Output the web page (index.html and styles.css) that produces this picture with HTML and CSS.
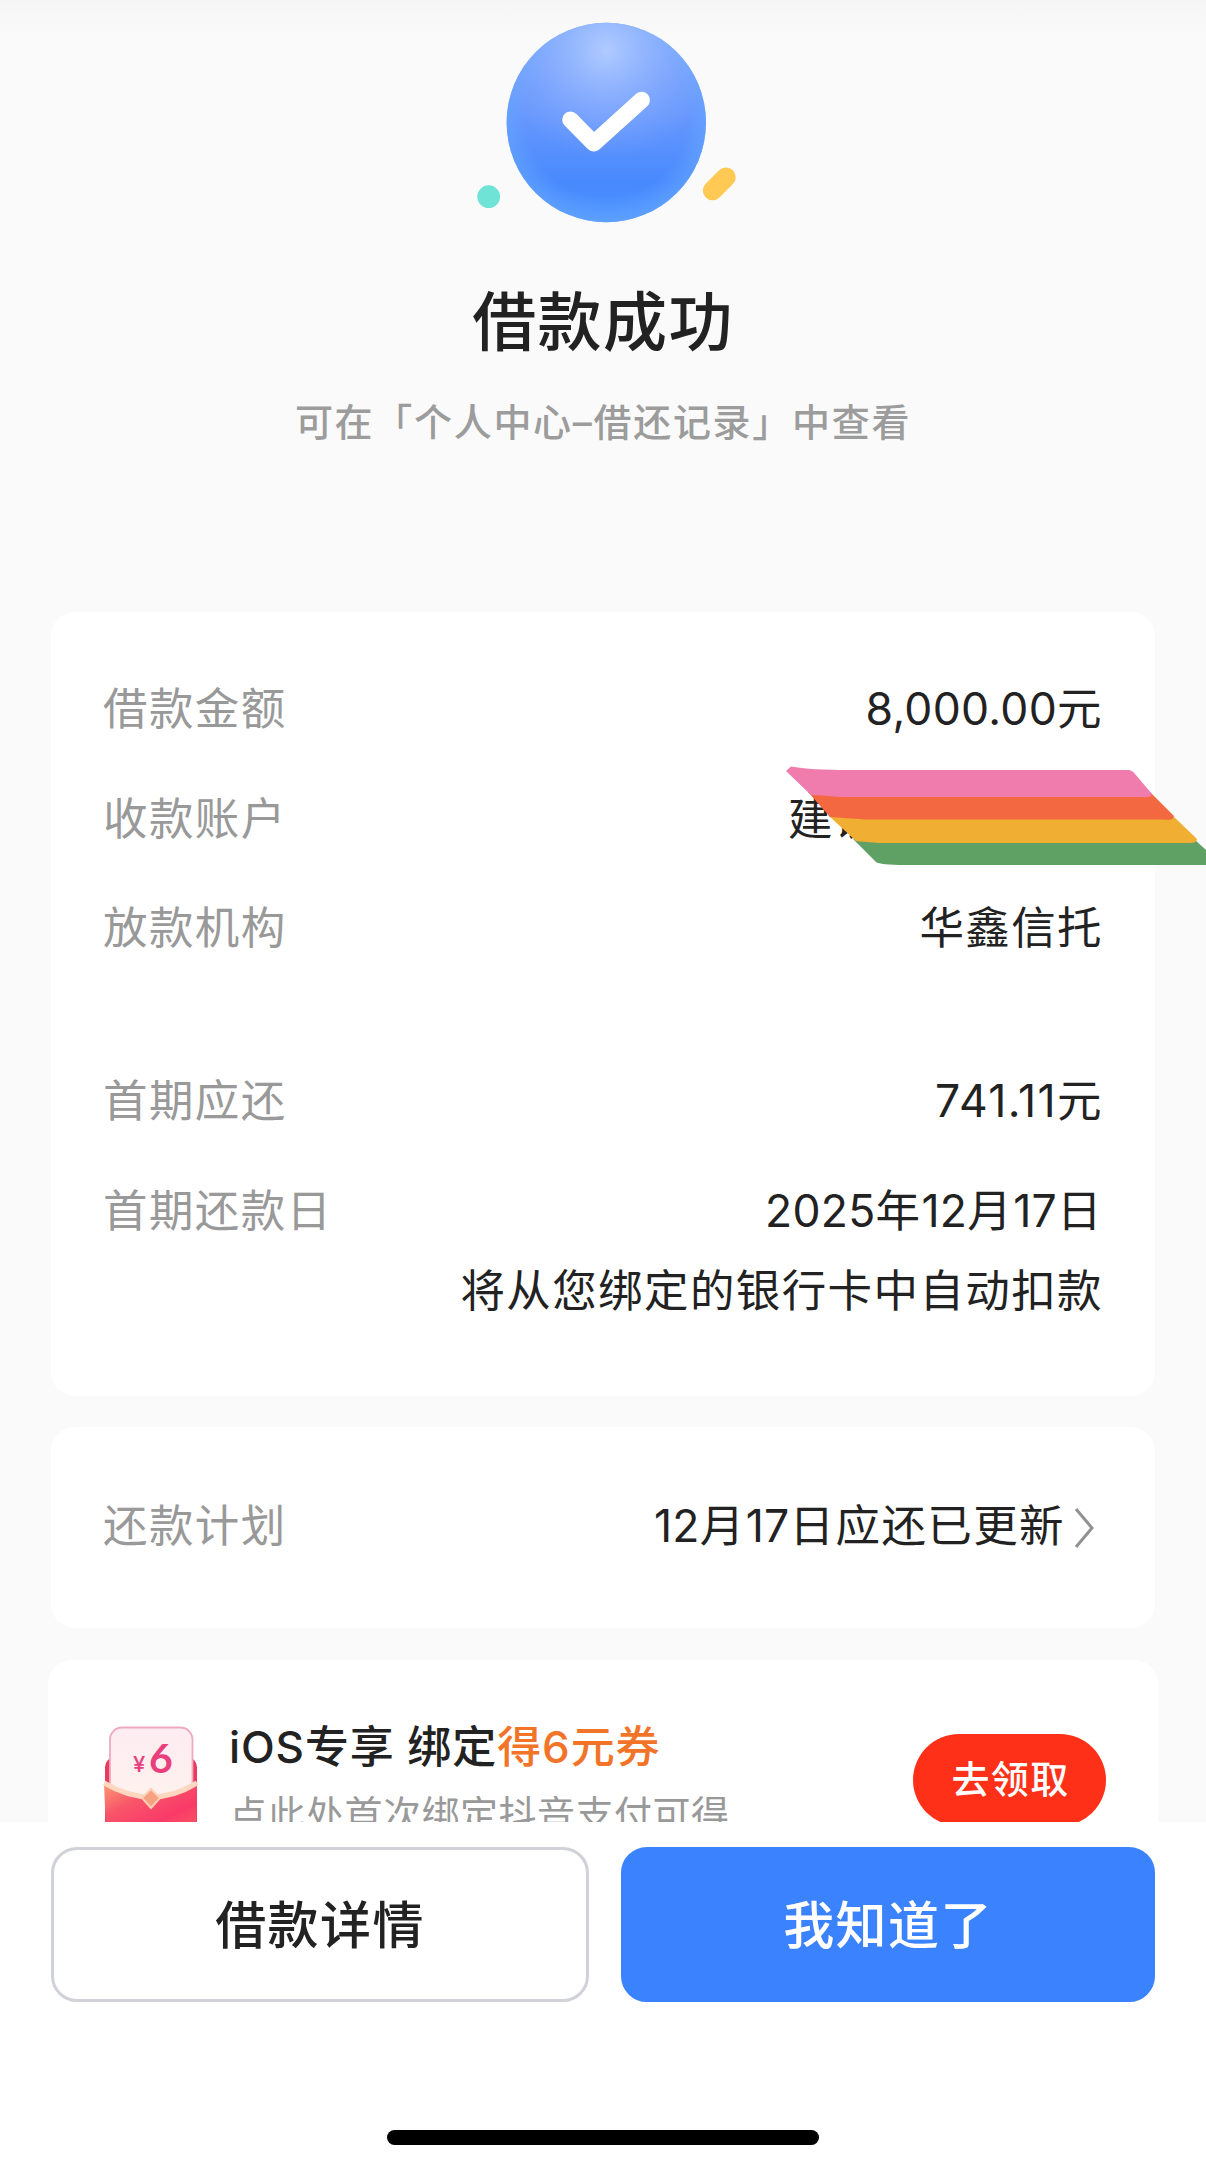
FILE: index.html
```
<!DOCTYPE html>
<html lang="zh-CN">
<head>
<meta charset="utf-8">
<title>借款成功</title>
<link rel="stylesheet" href="styles.css">
</head>
<body>
<div class="page">
  <main class="content">
    <header class="result">
      <svg class="result-icon" width="280" height="240" viewBox="463 0 280 240">
        <defs>
          <linearGradient id="ball" x1="0" y1="0" x2="0" y2="1">
            <stop offset="0" stop-color="#7ba6fc"/>
            <stop offset="0.45" stop-color="#6898fd"/>
            <stop offset="0.8" stop-color="#4889fe"/>
            <stop offset="1" stop-color="#4c92ff"/>
          </linearGradient>
          <radialGradient id="shine" cx="0.5" cy="0.14" r="0.55">
            <stop offset="0" stop-color="#b0cbff"/>
            <stop offset="1" stop-color="#86a9ff" stop-opacity="0"/>
          </radialGradient>
          <radialGradient id="rim" cx="0.5" cy="0.47" r="0.54">
            <stop offset="0.75" stop-color="#66a8ff" stop-opacity="0"/>
            <stop offset="1" stop-color="#66a8ff" stop-opacity="0.7"/>
          </radialGradient>
        </defs>
        <circle cx="606.3" cy="122.5" r="99.7" fill="url(#ball)"/>
        <circle cx="606.3" cy="122.5" r="99.7" fill="url(#rim)"/>
        <circle cx="606.3" cy="122.5" r="99.7" fill="url(#shine)"/>
        <path d="M570.5 119.7L593.7 143.3L641.7 100" fill="none" stroke="#fff" stroke-width="16.5" stroke-linecap="round" stroke-linejoin="round"/>
        <circle cx="488.7" cy="196.7" r="11.4" fill="#70e3d7"/>
        <path d="M712.6 190.6L726 177.2" stroke="#ffc953" stroke-width="19.5" stroke-linecap="round"/>
      </svg>
      <h1>借款成功</h1>
      <p>可在「个人中心–借还记录」中查看</p>
    </header>

    <section class="card detail">
      <div class="row"><span class="label">借款金额</span><span><span class="num">8,000.00</span>元</span></div>
      <div class="row account">
        <span class="label">收款账户</span><span class="bank">建设银行</span>
        <svg class="ribbon" width="422" height="104" viewBox="784 764 422 104">
          <path d="M853 839H1194L1206 850V865H905Q880 865 876 862Z" fill="#5fa065"/>
          <path d="M828 815H1172L1197 839Q1197 843 1190 843H880Q865 842 856 841Z" fill="#f0ae33"/>
          <path d="M808 792H1150L1174 816Q1173 821 1165 819.500H865Q845 818 830 817Z" fill="#f36841"/>
          <path d="M786 771L791 766.5Q810 770 850 770H1128Q1132 770 1135 774L1152 794Q1150 798 1143 797H840Q820 795 811 795Z" fill="#f07bad"/>
        </svg>
      </div>
      <div class="row"><span class="label">放款机构</span><span>华鑫信托</span></div>
      <div class="row first-due"><span class="label">首期应还</span><span>741.11元</span></div>
      <div class="row"><span class="label">首期还款日</span><span><span class="num">2025</span>年<span class="num">12</span>月<span class="num">17</span>日</span></div>
      <p class="note">将从您绑定的银行卡中自动扣款</p>
    </section>

    <section class="card plan">
      <span class="label">还款计划</span>
      <span class="plan-value"><span class="num">12</span>月<span class="num">17</span>日应还已更新</span>
      <svg class="arrow" width="22" height="42" viewBox="0 0 22 42"><path d="M2 2L18 21L2 40" fill="none" stroke="#919191" stroke-width="3"/></svg>
    </section>

    <section class="card promo">
      <svg class="coupon" width="96" height="100" viewBox="103 1726 96 100">
        <defs>
          <linearGradient id="paper" x1="0" y1="0" x2="0" y2="1">
            <stop offset="0" stop-color="#fdecf2"/>
            <stop offset="1" stop-color="#fff3ec"/>
          </linearGradient>
          <linearGradient id="pocket" x1="0" y1="0" x2="1" y2="1">
            <stop offset="0" stop-color="#fb9a72"/>
            <stop offset="0.35" stop-color="#f9556a"/>
            <stop offset="0.7" stop-color="#f93a68"/>
            <stop offset="1" stop-color="#fb5a63"/>
          </linearGradient>
        </defs>
        <rect x="105" y="1757" width="92" height="80" rx="10" fill="#e93a5c"/>
        <rect x="110" y="1727.5" width="82.5" height="90" rx="12" fill="url(#paper)" stroke="#eda9c0" stroke-width="1.8"/>
        <path d="M104 1784Q151 1814 197 1784L196 1830H106Z" fill="url(#pocket)"/>
        <path d="M104 1783Q151 1811 197 1783" fill="none" stroke="#ffd7c0" stroke-width="5"/>
        <path d="M151 1789L160 1798L151 1808L142 1798Z" fill="#f6a181" stroke="#ffd0b4" stroke-width="2"/>
        <text class="yen" x="133" y="1772">¥</text>
        <text class="six" x="149" y="1773">6</text>
      </svg>
      <div class="promo-text">
        <h2>iOS专享 绑定<em>得6元券</em></h2>
        <p>点此处首次绑定抖音支付可得</p>
      </div>
      <a class="claim" href="#">去领取</a>
    </section>
  </main>

  <footer class="actions">
    <div class="buttons">
      <a class="btn" href="#">借款详情</a>
      <a class="btn primary" href="#">我知道了</a>
    </div>
    <div class="home-bar"></div>
  </footer>
</div>
</body>
</html>
```
FILE: styles.css
```
* { box-sizing: border-box; margin: 0; padding: 0; }

body {
  font-family: Inter, "Noto Sans CJK SC", sans-serif;
  font-size: 44.5px;
  letter-spacing: 1.4px;
  color: #222;
  background: #fafafa;
}

a { text-decoration: none; color: inherit; }

.page {
  display: flex;
  flex-direction: column;
  width: 1206px;
  height: 2169px;
  overflow: hidden;
}

.content {
  height: 1822px;
  overflow: hidden;
  background: linear-gradient(#f6f6f6, #fafafa 40px);
}

.result {
  display: flex;
  flex-direction: column;
  align-items: center;
  height: 612px;
}
.result-icon { display: block; }
.result h1 {
  margin-top: 34px;
  font-size: 64px;
  font-weight: 500;
  line-height: 96px;
}
.result p {
  margin-top: 24px;
  font-size: 38px;
  font-weight: 500;
  line-height: 56px;
  letter-spacing: 1.7px;
  color: #9c9c9c;
}

.card {
  margin: 0 51px;
  background: #fff;
  border-radius: 24px;
}

.detail { height: 784px; padding: 43px 52px 0; }
.row {
  position: relative;
  display: flex;
  justify-content: space-between;
  height: 109.5px;
  line-height: 109.5px;
}
.label { color: #999; }
.num { letter-spacing: 0.3px; }
.first-due { margin-top: 63.5px; }
.note { margin-top: -5px; line-height: 60px; text-align: right; }

.account .bank { width: 315px; }
.ribbon { position: absolute; top: -1px; right: -103px; }

.plan {
  display: flex;
  align-items: center;
  height: 201px;
  margin-top: 31px;
  padding: 0 59px 0 52px;
}
.plan .label, .plan-value { padding-bottom: 10px; }
.plan-value { margin-left: auto; }
.arrow { margin-left: 9px; }

.promo {
  display: flex;
  height: 220px;
  margin: 32px 48px 0;
  padding: 0 52px 0 55px;
}
.coupon { margin-top: 66px; }
.yen { font-size: 22px; font-weight: 500; fill: #e7407c; }
.six { font-family: Lato, sans-serif; font-size: 41px; font-weight: 700; fill: #e7407c; }
.promo-text { margin-left: 30px; padding-top: 55px; white-space: nowrap; }
.promo h2 { font-size: 44px; font-weight: 500; line-height: 64px; letter-spacing: 0.9px; }
.promo em { font-style: normal; color: #f27429; }
.promo p { margin-top: 7px; font-size: 38px; line-height: 56px; letter-spacing: 0.5px; color: #999; }
.claim {
  width: 193px;
  height: 92px;
  margin: 74px 0 0 auto;
  padding-left: 2px;
  border-radius: 46px;
  background: #fe3018;
  color: #fff;
  font-size: 38px;
  font-weight: 500;
  line-height: 90px;
  text-align: center;
}

.actions {
  flex: 1;
  display: flex;
  flex-direction: column;
  align-items: center;
  justify-content: space-between;
  padding: 25px 51px 24px;
  background: #fff;
}
.buttons { display: flex; justify-content: space-between; width: 100%; }
.btn {
  width: 538px;
  height: 155px;
  border: 3px solid #d0d1d9;
  border-radius: 26px;
  font-size: 51px;
  font-weight: 500;
  line-height: 152px;
  text-align: center;
}
.primary {
  width: 534px;
  border-color: #3b82fe;
  background: #3b82fe;
  color: #fff;
}
.home-bar { width: 432px; height: 15px; border-radius: 8px; background: #000; }
```
